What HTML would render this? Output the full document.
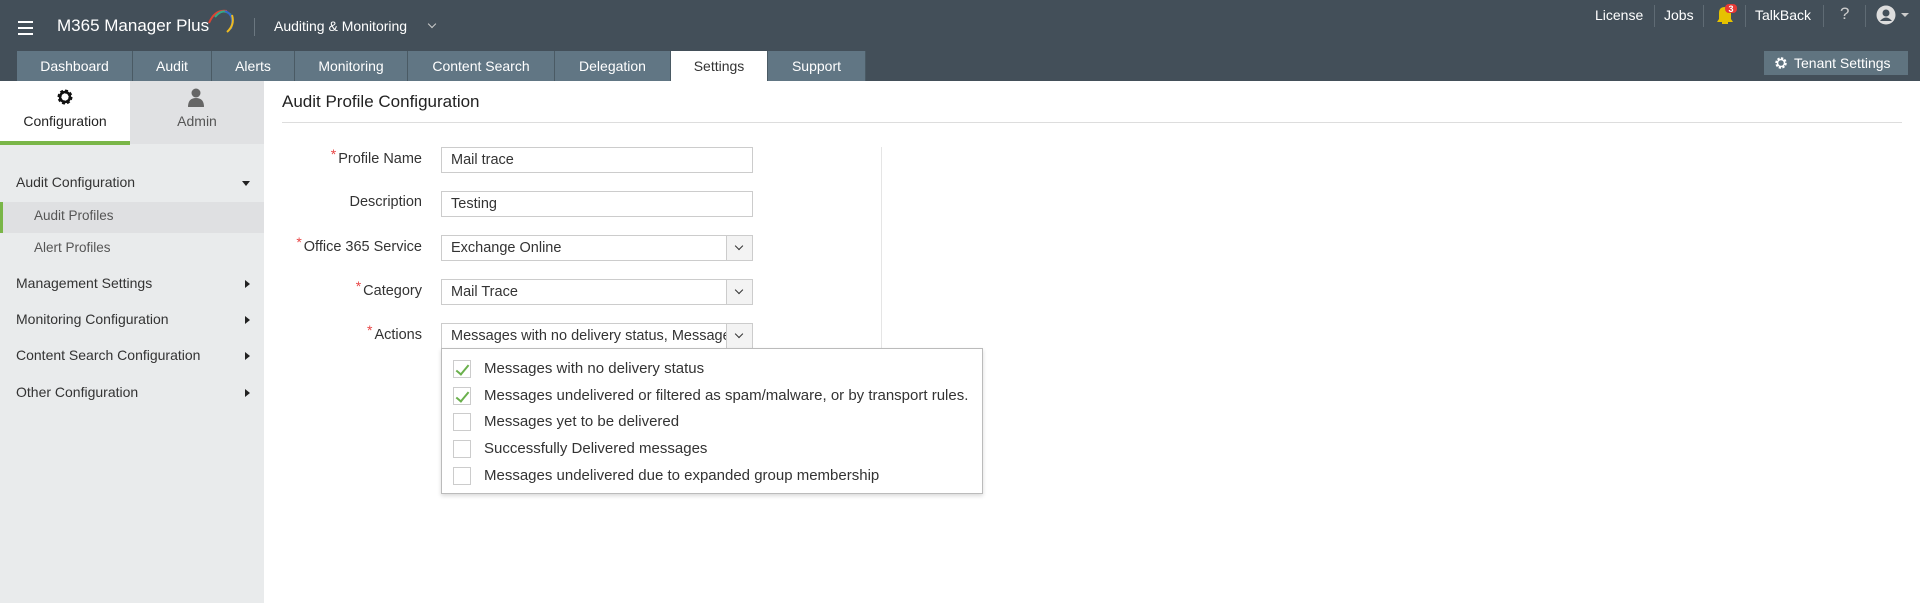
<!DOCTYPE html>
<html><head><meta charset="utf-8"><style>
*{margin:0;padding:0;box-sizing:border-box}
body{width:1920px;height:603px;overflow:hidden;background:#fff;font-family:"Liberation Sans",sans-serif;position:relative;color:#333}
.abs{position:absolute}
#hdr{left:0;top:0;width:1920px;height:81px;background:#434f59}
.tab{position:absolute;top:51px;height:30px;background:#617684;color:#fff;font-size:14px;line-height:30px;text-align:center;border-right:1px solid #4a5a64}
.tr{position:absolute;top:7px;color:#fff;font-size:14px}
.sep{position:absolute;top:5px;width:1px;height:22px;background:#5f6b74}
#side{left:0;top:81px;width:264px;height:522px;background:#e9ebec}
.si{position:absolute;left:16px;font-size:14px;color:#333}
.arr{position:absolute;left:245px;width:0;height:0;border-top:4px solid transparent;border-bottom:4px solid transparent;border-left:5px solid #222}
.lbl{position:absolute;right:1498px;font-size:14.5px;color:#333;text-align:right}
.lbl b{color:#e84545;font-weight:normal;font-size:14px;position:relative;top:-4px;margin-right:2px}
.inp{position:absolute;left:441px;width:312px;height:26px;border:1px solid #ccc;font-size:14.5px;line-height:24px;padding-left:9px;color:#333;background:#fff}
.dd{position:absolute;right:0;top:0;width:26px;height:24px;border-left:1px solid #ccc;background:#f3f3f3}
.dd:after{content:"";position:absolute;left:9px;top:7px;width:5px;height:5px;border-right:1.5px solid #333;border-bottom:1.5px solid #333;transform:rotate(45deg)}
.it{position:absolute;left:11px;font-size:15px;color:#333}
.cb{position:absolute;left:11px;width:18px;height:18px;border:1px solid #ccc;background:#fff}
.cb.on:after{content:"";position:absolute;left:5px;top:1px;width:5px;height:11px;border-right:2px solid #6ab04c;border-bottom:2px solid #6ab04c;transform:rotate(40deg)}
</style></head><body>
<div id="hdr" class="abs"></div>
<div class="abs" style="left:18px;top:21px;width:15px;height:2px;background:#fff;box-shadow:0 6px 0 #fff,0 12px 0 #fff"></div>
<div class="abs" style="left:57px;top:16px;color:#fff;font-size:17px">M365 Manager Plus</div>
<svg class="abs" style="left:205px;top:5px" width="32" height="30"><path d="M4 18 Q10 4 22 6" stroke="#d43" stroke-width="2" fill="none"/><path d="M10 12 Q18 2 26 10" stroke="#3a8" stroke-width="2" fill="none"/><path d="M20 6 Q30 10 26 24" stroke="#36c" stroke-width="2" fill="none"/><path d="M27 10 Q30 20 22 27" stroke="#eb2" stroke-width="2" fill="none"/></svg>
<div class="abs" style="left:254px;top:18px;width:1px;height:18px;background:#6b7780"></div>
<div class="abs" style="left:274px;top:18px;color:#fff;font-size:14px">Auditing &amp; Monitoring</div>
<div class="abs" style="left:429px;top:21px;width:6px;height:6px;border-right:1px solid #ccc;border-bottom:1px solid #ccc;transform:rotate(45deg)"></div>
<div class="tab" style="left:17px;width:116px">Dashboard</div>
<div class="tab" style="left:133px;width:79px">Audit</div>
<div class="tab" style="left:212px;width:83px">Alerts</div>
<div class="tab" style="left:295px;width:113px">Monitoring</div>
<div class="tab" style="left:408px;width:147px">Content Search</div>
<div class="tab" style="left:555px;width:116px">Delegation</div>
<div class="tab" style="left:671px;width:97px;background:#fff;color:#333">Settings</div>
<div class="tab" style="left:768px;width:98px">Support</div>
<div class="tr" style="left:1595px">License</div><div class="sep" style="left:1654px"></div>
<div class="tr" style="left:1664px">Jobs</div><div class="sep" style="left:1703px"></div>
<svg class="abs" style="left:1714px;top:3px" width="28" height="22"><path d="M3 19 L19 19 L17 16 L17 10 Q17 4 11 4 Q5 4 5 10 L5 16 Z" fill="#e6c200"/><rect x="8" y="19" width="6" height="2" fill="#e6c200"/><rect x="11" y="1" width="12" height="9" rx="4" fill="#e53935"/><text x="17" y="9" font-size="9" font-weight="bold" fill="#fff" text-anchor="middle" font-family="Liberation Sans">3</text></svg>
<div class="sep" style="left:1745px"></div>
<div class="tr" style="left:1755px">TalkBack</div><div class="sep" style="left:1823px"></div>
<div class="tr" style="left:1840px;color:#ccc;font-size:17px;top:4px">?</div><div class="sep" style="left:1865px"></div>
<svg class="abs" style="left:1876px;top:5px" width="36" height="22"><circle cx="10" cy="10" r="9.5" fill="#ddd"/><circle cx="10" cy="8" r="3.5" fill="#434f59"/><path d="M4 16 Q10 9 16 16Z" fill="#434f59"/><path d="M25 8 L33 8 L29 12Z" fill="#ccc"/></svg>
<div class="abs" style="left:1764px;top:51px;width:144px;height:24px;background:#607480;color:#fff;font-size:14px;line-height:24px;padding-left:30px">Tenant Settings</div>
<svg class="abs" style="left:1774px;top:56px" width="14" height="14"><circle cx="7" cy="7" r="4.5" fill="none" stroke="#fff" stroke-width="2.5" stroke-dasharray="2.2 1.3"/><circle cx="7" cy="7" r="3.5" fill="none" stroke="#fff" stroke-width="1.5"/></svg>

<div id="side" class="abs"></div>
<div class="abs" style="left:0;top:81px;width:130px;height:63px;background:#fff"></div>
<div class="abs" style="left:130px;top:81px;width:134px;height:63px;background:#e0e1e3"></div>
<div class="abs" style="left:0;top:141px;width:130px;height:4px;background:#7ab648"></div>
<svg class="abs" style="left:56px;top:88px" width="18" height="18"><circle cx="9" cy="9" r="5.5" fill="none" stroke="#111" stroke-width="4" stroke-dasharray="2.5 1.8"/><circle cx="9" cy="9" r="5" fill="none" stroke="#111" stroke-width="2.5"/><circle cx="9" cy="9" r="2" fill="#fff"/></svg>
<div class="abs" style="left:0;width:130px;top:113px;text-align:center;font-size:14px;color:#222">Configuration</div>
<svg class="abs" style="left:187px;top:88px" width="18" height="20"><circle cx="9" cy="5" r="4.5" fill="#666"/><path d="M1 19 Q1 10 9 10 Q17 10 17 19Z" fill="#666"/></svg>
<div class="abs" style="left:130px;width:134px;top:113px;text-align:center;font-size:14px;color:#555">Admin</div>
<div class="si" style="top:174px">Audit Configuration</div>
<div class="abs" style="left:242px;top:181px;width:0;height:0;border-left:4px solid transparent;border-right:4px solid transparent;border-top:5px solid #222"></div>
<div class="abs" style="left:0;top:202px;width:264px;height:31px;background:#dfe0e2"></div>
<div class="abs" style="left:0;top:202px;width:3px;height:31px;background:#7ab648"></div>
<div class="si" style="left:34px;top:208px;color:#555;font-size:13.5px">Audit Profiles</div>
<div class="si" style="left:34px;top:240px;color:#555;font-size:13.5px">Alert Profiles</div>
<div class="si" style="top:275px">Management Settings</div><div class="arr" style="top:280px"></div>
<div class="si" style="top:311px">Monitoring Configuration</div><div class="arr" style="top:316px"></div>
<div class="si" style="top:347px">Content Search Configuration</div><div class="arr" style="top:352px"></div>
<div class="si" style="top:384px">Other Configuration</div><div class="arr" style="top:389px"></div>

<div class="abs" style="left:282px;top:92px;font-size:17px;color:#222">Audit Profile Configuration</div>
<div class="abs" style="left:282px;top:122px;width:1620px;height:1px;background:#ddd"></div>
<div class="abs" style="left:881px;top:147px;width:1px;height:203px;background:#e5e5e5"></div>

<div class="lbl" style="top:150px"><b>*</b>Profile Name</div>
<div class="inp" style="top:147px">Mail trace</div>
<div class="lbl" style="top:194px">Description</div>
<div class="inp" style="top:191px">Testing</div>
<div class="lbl" style="top:238px"><b>*</b>Office 365 Service</div>
<div class="inp" style="top:235px">Exchange Online<div class="dd"></div></div>
<div class="lbl" style="top:282px"><b>*</b>Category</div>
<div class="inp" style="top:279px">Mail Trace<div class="dd"></div></div>
<div class="lbl" style="top:326px"><b>*</b>Actions</div>
<div class="inp" style="top:323px;height:26px;overflow:hidden;white-space:nowrap;padding-right:26px">Messages with no delivery status, Messages undelivered<div class="dd"></div></div>

<div class="abs" style="left:441px;top:348px;width:542px;height:146px;background:#fff;border:1px solid #bbb;box-shadow:0 2px 4px rgba(0,0,0,.15)">
<div class="cb on" style="top:11px"></div><div class="it" style="left:42px;top:11px">Messages with no delivery status</div>
<div class="cb on" style="top:38px"></div><div class="it" style="left:42px;top:38px">Messages undelivered or filtered as spam/malware, or by transport rules.</div>
<div class="cb" style="top:64px"></div><div class="it" style="left:42px;top:64px">Messages yet to be delivered</div>
<div class="cb" style="top:91px"></div><div class="it" style="left:42px;top:91px">Successfully Delivered messages</div>
<div class="cb" style="top:118px"></div><div class="it" style="left:42px;top:118px">Messages undelivered due to expanded group membership</div>
</div>
</body></html>
